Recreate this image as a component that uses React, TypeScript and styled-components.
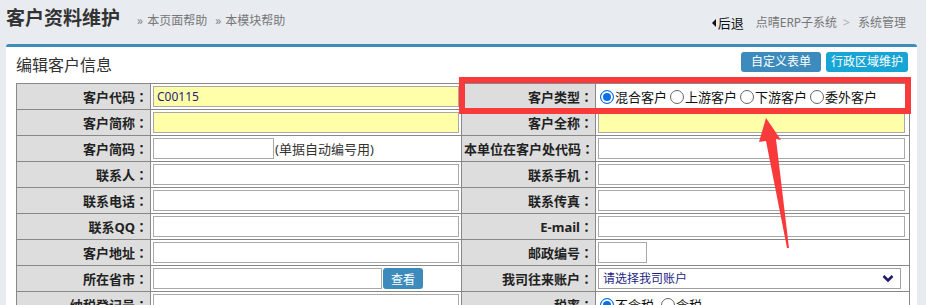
import React from "react";
import styled, { createGlobalStyle } from "styled-components";

const GlobalStyle = createGlobalStyle`
  body {
    margin: 0;
    background: #e8ebf0;
    font-family: "Noto Sans", "Noto Sans CJK SC", sans-serif;
    color: #333;
  }
`;

const StyledPage = styled.div`
  position: relative;
  padding: 0 9px 0 6px;
  height: 305px;
  overflow: hidden;
`;

const StyledHeader = styled.div`
  display: flex;
  align-items: flex-start;
  height: 44px;
`;

const StyledTitle = styled.h1`
  margin: 7px 0 0;
  font-size: 19px;
  line-height: 22px;
  font-weight: bold;
  color: #333;
`;

const StyledHelpLinks = styled.div`
  display: flex;
  margin: 13px 0 0 17px;
  font-size: 12px;
  line-height: 16px;
  color: #777;
`;

const StyledHelpLink = styled.span`
  margin-right: 8px;

  &::before {
    content: "»";
    margin-right: 4px;
    color: #888;
  }
`;

const StyledCrumbs = styled.div`
  display: flex;
  align-items: center;
  margin: 15px 11px 0 auto;
  font-size: 12px;
  line-height: 16px;
  color: #777;
`;

const StyledBack = styled.span`
  display: flex;
  align-items: center;
  margin-right: 12px;
  font-size: 13px;
  color: #111;

  &::before {
    content: "";
    border-style: solid;
    border-width: 4px 4px 4px 0;
    border-color: transparent #111 transparent transparent;
    margin-right: 2px;
  }
`;

const StyledCrumbSep = styled.span`
  margin: 0 8px 0 6px;
  color: #aaa;
`;

const StyledPanel = styled.div`
  background: #fff;
  border-top: 3px solid #3c8dbc;
  border-radius: 3px 3px 0 0;
  height: 300px;
`;

const StyledPanelHead = styled.div`
  display: flex;
  justify-content: space-between;
  align-items: flex-start;
  box-sizing: border-box;
  height: 36px;
  padding: 5px 9px 0 10px;
`;

const StyledPanelTitle = styled.h2`
  margin: 3px 0 0;
  font-size: 16px;
  line-height: 20px;
  font-weight: normal;
  color: #333;
`;

const StyledButtonGroup = styled.div`
  display: flex;
  gap: 5px;
`;

const StyledToolButton = styled.button<{ $bg: string; $pad: number }>`
  height: 20px;
  padding: 0 ${({ $pad }) => $pad}px;
  border: 0;
  border-radius: 3px;
  background: ${({ $bg }) => $bg};
  color: #fff;
  font-family: inherit;
  font-size: 12px;
  line-height: 20px;
`;

const StyledTable = styled.table`
  margin-left: 10px;
  width: 893px;
  border-collapse: collapse;
  table-layout: fixed;
`;

const StyledLabel = styled.td`
  border: 1px solid #888;
  padding: 2px 2px 2px 2px;
  background: #dddddd;
  text-align: right;
  font-size: 13px;
  font-weight: bold;
  color: #222;
  white-space: nowrap;
`;

/* centred full-width colon, as the original font draws it */
const StyledColon = styled.span`
  font-family: "Noto Sans CJK TC", sans-serif;
`;

const StyledField = styled.td`
  border: 1px solid #888;
  padding: 2px;
`;

const StyledFieldRow = styled.div`
  display: flex;
  align-items: center;
  height: 21px;
  font-size: 13px;
  color: #222;
`;

const StyledInput = styled.input<{ $w: number; $required?: boolean }>`
  box-sizing: border-box;
  width: ${({ $w }) => $w}px;
  height: 21px;
  padding: 0 3px;
  border: 1px solid #a9a9a9;
  background: ${({ $required }) => ($required ? "#ffffaa" : "#fff")};
  font-family: inherit;
  font-size: 12px;
  color: #1e1e7a;
  outline: none;
`;

const StyledHint = styled.span`
  margin-left: 1px;
  color: #333;
`;

const StyledLookButton = styled.button`
  width: 40px;
  height: 21px;
  margin-left: 1px;
  padding: 0;
  border: 0;
  border-radius: 3px;
  background: #3d8bbd;
  color: #fff;
  font-family: inherit;
  font-size: 12px;
`;

const StyledRadioItem = styled.label<{ $gap: number }>`
  display: flex;
  align-items: center;
  margin-right: ${({ $gap }) => $gap}px;
  color: #111;
`;

const StyledRadio = styled.input`
  appearance: none;
  box-sizing: border-box;
  width: 14px;
  height: 14px;
  margin: 0 1px 0 2px;
  border: 1px solid #666;
  border-radius: 50%;
  background: #fff;

  &:checked {
    border-color: #0b6fe8;
    background: #0b6fe8;
    box-shadow: inset 0 0 0 2px #fff;
  }
`;

const StyledSelectWrap = styled.div`
  position: relative;
  width: 303px;
  height: 21px;
`;

const StyledSelect = styled.select`
  appearance: none;
  box-sizing: border-box;
  width: 100%;
  height: 21px;
  padding: 0 0 0 4px;
  border: 1px solid #a0a0a0;
  border-radius: 0;
  background: #fff;
  font-family: inherit;
  font-size: 12px;
  color: #1e1e82;
`;

const StyledChevron = styled.svg`
  position: absolute;
  right: 7px;
  top: 6px;
  pointer-events: none;
`;

const StyledRedBox = styled.div`
  position: absolute;
  left: 459px;
  top: 77px;
  width: 452px;
  height: 37px;
  box-sizing: border-box;
  border: 6px solid #f93a3a;
`;

const StyledArrow = styled.svg`
  position: absolute;
  left: 750px;
  top: 110px;
`;

interface RadioOption {
  text: string;
  checked?: boolean;
}

const RadioGroup = ({ name, options, gap }: { name: string; options: RadioOption[]; gap: number }) => (
  <StyledFieldRow>
    {options.map((o) => (
      <StyledRadioItem key={o.text} $gap={gap}>
        <StyledRadio type="radio" name={name} defaultChecked={o.checked} />
        {o.text}
      </StyledRadioItem>
    ))}
  </StyledFieldRow>
);

const Label = ({ text }: { text: string }) => (
  <StyledLabel>
    {text}
    <StyledColon>：</StyledColon>
  </StyledLabel>
);

const Text = ({ w, required, value }: { w: number; required?: boolean; value?: string }) => (
  <StyledFieldRow>
    <StyledInput $w={w} $required={required} defaultValue={value} />
  </StyledFieldRow>
);

const App = () => {
  return (
    <StyledPage>
      <GlobalStyle />
      <StyledHeader>
        <StyledTitle>客户资料维护</StyledTitle>
        <StyledHelpLinks>
          <StyledHelpLink>本页面帮助</StyledHelpLink>
          <StyledHelpLink>本模块帮助</StyledHelpLink>
        </StyledHelpLinks>
        <StyledCrumbs>
          <StyledBack>后退</StyledBack>
          <span>点晴ERP子系统</span>
          <StyledCrumbSep>&gt;</StyledCrumbSep>
          <span>系统管理</span>
        </StyledCrumbs>
      </StyledHeader>

      <StyledPanel>
        <StyledPanelHead>
          <StyledPanelTitle>编辑客户信息</StyledPanelTitle>
          <StyledButtonGroup>
            <StyledToolButton $bg="#3d8bbd" $pad={10}>自定义表单</StyledToolButton>
            <StyledToolButton $bg="#17a5d6" $pad={5}>行政区域维护</StyledToolButton>
          </StyledButtonGroup>
        </StyledPanelHead>

        <StyledTable>
          <colgroup>
            <col style={{ width: 134 }} />
            <col style={{ width: 311 }} />
            <col style={{ width: 134 }} />
            <col style={{ width: 314 }} />
          </colgroup>
          <tbody>
            <tr>
              <Label text="客户代码" />
              <StyledField><Text w={306} required value="C00115" /></StyledField>
              <Label text="客户类型" />
              <StyledField>
                <RadioGroup
                  name="ctype"
                  gap={1}
                  options={[{ text: "混合客户", checked: true }, { text: "上游客户" }, { text: "下游客户" }, { text: "委外客户" }]}
                />
              </StyledField>
            </tr>
            <tr>
              <Label text="客户简称" />
              <StyledField><Text w={306} required /></StyledField>
              <Label text="客户全称" />
              <StyledField><Text w={307} required /></StyledField>
            </tr>
            <tr>
              <Label text="客户简码" />
              <StyledField>
                <StyledFieldRow>
                  <StyledInput $w={121} />
                  <StyledHint>(单据自动编号用)</StyledHint>
                </StyledFieldRow>
              </StyledField>
              <Label text="本单位在客户处代码" />
              <StyledField><Text w={307} /></StyledField>
            </tr>
            <tr>
              <Label text="联系人" />
              <StyledField><Text w={306} /></StyledField>
              <Label text="联系手机" />
              <StyledField><Text w={307} /></StyledField>
            </tr>
            <tr>
              <Label text="联系电话" />
              <StyledField><Text w={306} /></StyledField>
              <Label text="联系传真" />
              <StyledField><Text w={307} /></StyledField>
            </tr>
            <tr>
              <Label text="联系QQ" />
              <StyledField><Text w={306} /></StyledField>
              <Label text="E-mail" />
              <StyledField><Text w={307} /></StyledField>
            </tr>
            <tr>
              <Label text="客户地址" />
              <StyledField><Text w={306} /></StyledField>
              <Label text="邮政编号" />
              <StyledField><Text w={49} /></StyledField>
            </tr>
            <tr>
              <Label text="所在省市" />
              <StyledField>
                <StyledFieldRow>
                  <StyledInput $w={229} />
                  <StyledLookButton>查看</StyledLookButton>
                </StyledFieldRow>
              </StyledField>
              <Label text="我司往来账户" />
              <StyledField>
                <StyledFieldRow>
                  <StyledSelectWrap>
                    <StyledSelect defaultValue="">
                      <option value="">请选择我司账户</option>
                    </StyledSelect>
                    <StyledChevron width="12" height="9" viewBox="0 0 12 9">
                      <path d="M1.5 2 L6 6.5 L10.5 2" fill="none" stroke="#1c1c6b" strokeWidth="2.6" />
                    </StyledChevron>
                  </StyledSelectWrap>
                </StyledFieldRow>
              </StyledField>
            </tr>
            <tr>
              <Label text="纳税登记号" />
              <StyledField><Text w={306} /></StyledField>
              <Label text="税率" />
              <StyledField>
                <RadioGroup name="tax" gap={5} options={[{ text: "不含税", checked: true }, { text: "含税" }]} />
              </StyledField>
            </tr>
          </tbody>
        </StyledTable>
      </StyledPanel>

      <StyledRedBox />
      <StyledArrow width="45" height="145" viewBox="750 110 45 145">
        <polygon
          points="766,118 781,140 776,139 789,248 787,248 766,141 759,142"
          fill="#f93a3a"
        />
      </StyledArrow>
    </StyledPage>
  );
};

export default App;
